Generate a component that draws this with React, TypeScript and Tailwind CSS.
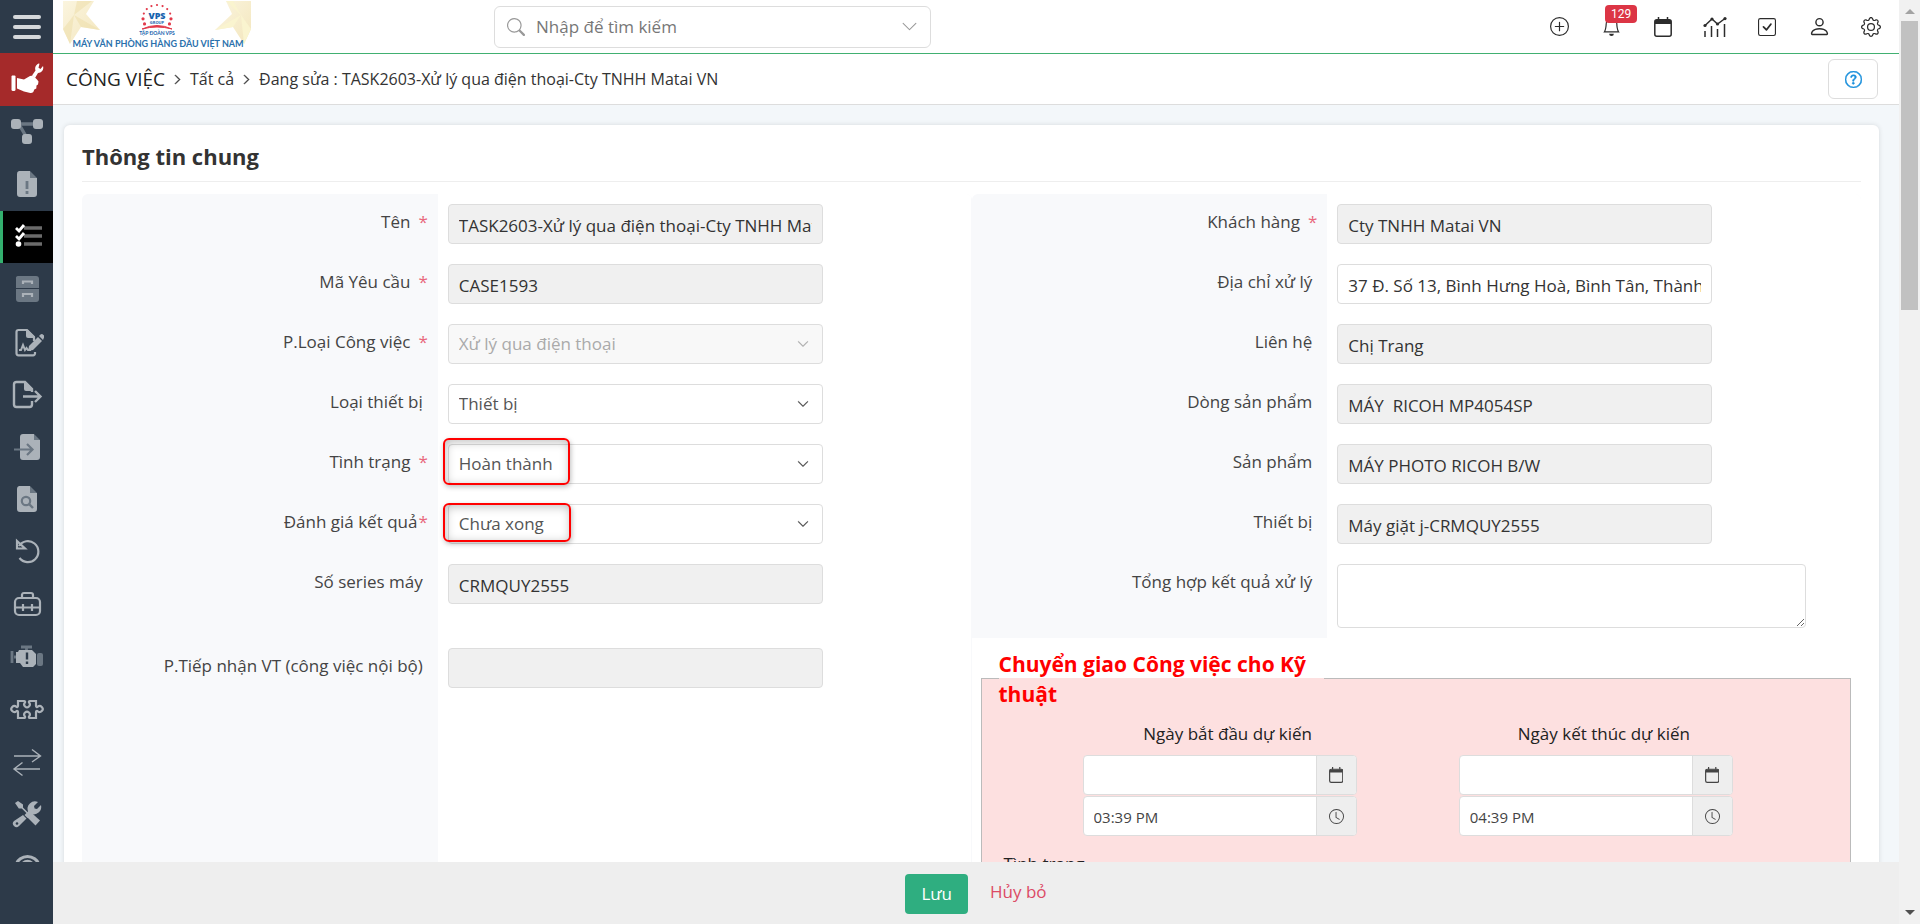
import { useState, type ReactNode } from "react";
import {
  BsBell,
  BsCheckSquare,
  BsChevronDown,
  BsChevronRight,
  BsClock,
  BsGear,
  BsPerson,
  BsPlusCircle,
  BsQuestionCircle,
  BsSearch
} from "react-icons/bs";

type Field = {
  id: string;
  label: string;
  value: string;
  required?: boolean;
  kind?: "text" | "select" | "textarea";
  readOnly?: boolean;
  disabled?: boolean;
  mark?: "tall" | "short";
};

const leftFields: Field[] = [
  { id: "name", label: "Tên", value: "TASK2603-Xử lý qua điện thoại-Cty TNHH Matai VN", required: true, readOnly: true },
  { id: "case", label: "Mã Yêu cầu", value: "CASE1593", required: true, readOnly: true },
  { id: "type", label: "P.Loại Công việc", value: "Xử lý qua điện thoại", required: true, kind: "select", disabled: true },
  { id: "deviceType", label: "Loại thiết bị", value: "Thiết bị", kind: "select" },
  { id: "status", label: "Tình trạng", value: "Hoàn thành", required: true, kind: "select", mark: "tall" },
  { id: "result", label: "Đánh giá kết quả", value: "Chưa xong", required: true, kind: "select", mark: "short" },
  { id: "serial", label: "Số series máy", value: "CRMQUY2555", readOnly: true },
  { id: "internal", label: "P.Tiếp nhận VT (công việc nội bộ)", value: "", readOnly: true }
];

const rightFields: Field[] = [
  { id: "customer", label: "Khách hàng", value: "Cty TNHH Matai VN", required: true, readOnly: true },
  { id: "address", label: "Địa chỉ xử lý", value: "37 Đ. Số 13, Bình Hưng Hoà, Bình Tân, Thành phố Hồ Chí Minh" },
  { id: "contact", label: "Liên hệ", value: "Chị Trang", readOnly: true },
  { id: "line", label: "Dòng sản phẩm", value: "MÁY  RICOH MP4054SP", readOnly: true },
  { id: "product", label: "Sản phẩm", value: "MÁY PHOTO RICOH B/W", readOnly: true },
  { id: "device", label: "Thiết bị", value: "Máy giặt j-CRMQUY2555", readOnly: true },
  { id: "summary", label: "Tổng hợp kết quả xử lý", value: "", kind: "textarea" }
];

function Icon({ children }: { children: ReactNode }) {
  return (
    <svg viewBox="0 0 34 34" className="size-[34px]" fill="none" aria-hidden="true">
      {children}
    </svg>
  );
}

const G = "#abb2b9";
const D = "#6b7783";

const menu: { name: string; icon: ReactNode }[] = [
  {
    name: "Quy trình",
    icon: (
      <>
        <path d="M10 9h14M10 11l7 12" stroke={D} strokeWidth="3.4" />
        <rect x="1" y="4" width="10" height="10" rx="3" fill={G} />
        <rect x="23" y="4" width="10" height="10" rx="3" fill={G} />
        <rect x="12" y="19" width="10" height="10" rx="3" fill={G} />
      </>
    )
  },
  {
    name: "Yêu cầu",
    icon: (
      <>
        <path d="M9 4h11v7h7v16a3 3 0 0 1-3 3H10a3 3 0 0 1-3-3V7a3 3 0 0 1 2-3z" fill={G} />
        <path d="M20 4l7 7h-7z" fill={D} />
        <path d="M17 14v8M17 24v3" stroke={D} strokeWidth="2.8" />
      </>
    )
  },
  {
    name: "Công việc",
    icon: (
      <>
        <path d="M14 8h18M14 16h18M14 24h18" stroke="#6b6b6b" strokeWidth="3.4" />
        <path d="M6 8l3 3 5-6M6 16l3 3 5-6" stroke="#fff" strokeWidth="2.8" />
        <circle cx="8.5" cy="24" r="2.8" fill="#fff" />
      </>
    )
  },
  {
    name: "Lưu trữ",
    icon: (
      <>
        <path d="M8 4h18a3 3 0 0 1 3 3v9H6V7a2.5 2.5 0 0 1 2-3zM6 17h23v10a3 3 0 0 1-3 3H9a3 3 0 0 1-3-3z" fill={D} />
        <path d="M13 12V9.5h9V12M13 25v-3h9v3" stroke={G} strokeWidth="2.2" />
      </>
    )
  },
  {
    name: "Hợp đồng",
    icon: (
      <>
        <path d="M25 27v1.5a1.8 1.8 0 0 1-1.8 1.8H8.5a2 2 0 0 1-2-2V7a2 2 0 0 1 2-2H17l7 7v4" stroke={G} strokeWidth="2.2" />
        <path d="M16 5h2l7 7v1h-7a2 2 0 0 1-2-2z" fill={G} />
        <path d="M9 25h2l2-5 2 5 1.5-2 1.5 2h3" stroke={G} strokeWidth="2" />
        <path d="M19 21l9-9 4 4-9 9-5 1z" fill={G} />
        <path d="M29 11l1.5-1.5q1.5-1 3 .5t.3 3L33 15z" fill={G} />
      </>
    )
  },
  {
    name: "Xuất",
    icon: (
      <>
        <path d="M22 24v3.5a2.5 2.5 0 0 1-2.5 2.5h-13A2.5 2.5 0 0 1 4 27.5v-20A2.5 2.5 0 0 1 6.5 5H15l7 7v3" stroke={G} strokeWidth="2.4" />
        <path d="M14 5h2l7 7v2h-7a2 2 0 0 1-2-2z" fill={G} />
        <path d="M13 19.5h17M25 14l5.5 5.5L25 25" stroke={G} strokeWidth="2.4" />
      </>
    )
  },
  {
    name: "Nhập",
    icon: (
      <>
        <path d="M13 4h11v6h6v17a3 3 0 0 1-3 3H13a3 3 0 0 1-3-3V7a3 3 0 0 1 3-3z" fill={G} />
        <path d="M24 4l6 6h-6z" fill={D} />
        <path d="M4 19.5h18M17 14l5.5 5.5L17 25" stroke={D} strokeWidth="2.2" />
      </>
    )
  },
  {
    name: "Tra cứu",
    icon: (
      <>
        <path d="M9 4h11v7h7v16a3 3 0 0 1-3 3H10a3 3 0 0 1-3-3V7a3 3 0 0 1 2-3z" fill={G} />
        <path d="M20 4l7 7h-7z" fill={D} />
        <circle cx="16" cy="19" r="4.2" stroke={D} strokeWidth="2.2" />
        <path d="M19 22l4 4" stroke={D} strokeWidth="2.4" />
      </>
    )
  },
  {
    name: "Hoàn lại",
    icon: <path d="M7 6v7.5h8zM9 11a10.5 10.5 0 1 1 .5 12" stroke={G} strokeWidth="2.2" />
  },
  {
    name: "Bộ dụng cụ",
    icon: (
      <>
        <rect x="5" y="11" width="25" height="17" rx="4" stroke={G} strokeWidth="2.2" />
        <path d="M12 11V7.5A2 2 0 0 1 14 6h7a2 2 0 0 1 2 2v3M5 20.5h25M13 17v7M22 17v7" stroke={G} strokeWidth="2.2" />
      </>
    )
  },
  {
    name: "Máy lỗi",
    icon: (
      <>
        <path d="M11 7h11M16.5 7v4M2 11v12M4 17h4" stroke={D} strokeWidth="2.8" />
        <rect x="27" y="13" width="6" height="13" rx="2" fill={D} />
        <path d="M9 10h13l4 4v10l-3 3H13l-3-4H6V12h2z" fill={G} />
        <path d="M17 12.5v7M17 21.5V24" stroke="#2d3a49" strokeWidth="2.4" />
      </>
    )
  },
  {
    name: "Linh kiện",
    icon: (
      <path
        d="M8 9h6a1 1 0 0 1 .8 1.7 2.8 2.8 0 1 0 4.4 0A1 1 0 0 1 20 9h6v5a1 1 0 0 0 1.6.8 3 3 0 1 1 0 4.4 1 1 0 0 0-1.6.8v6h-6a1 1 0 0 1-.8-1.7 2.8 2.8 0 1 0-4.4 0A1 1 0 0 1 14 26H8v-6a1 1 0 0 0-1.6-.8 3 3 0 1 1 0-4.4A1 1 0 0 0 8 14z"
        stroke={G}
        strokeWidth="2.2"
      />
    )
  },
  {
    name: "Luân chuyển",
    icon: <path d="M4 11h26M22 4.5l8.5 6.5-8.5 6M30 24H4M12.5 17.5L4 24l8.5 6.5" stroke={G} strokeWidth="1.4" />
  },
  {
    name: "Cài đặt",
    icon: (
      <>
        <path d="M5 6l3-2 5 3.5v3l6 6 3-.3 8 7.3-4.5 5-8-8 .3-3-6-6h-3z" fill={G} />
        <path d="M28 5l-4 4 .6 2.4 2.4.6 4-4a7.5 7.5 0 0 1-9.5 9l-4 4-3-3 3.5-3.5A7.5 7.5 0 0 1 28 5zM13 18l3.5 3.5L9 29a3.3 3.3 0 0 1-5-5z" fill={G} />
        <circle cx="7" cy="26.5" r="1.3" fill="#2d3a49" />
      </>
    )
  },
  {
    name: "Mạng",
    icon: (
      <>
        <path d="M6 15a12 12 0 0 1 23 0" stroke={G} strokeWidth="3" />
        <circle cx="17.5" cy="17" r="6" stroke={G} strokeWidth="2.5" />
      </>
    )
  }
];

function Sidebar() {
  return (
    <aside className="flex w-[53px] shrink-0 flex-col bg-[#2d3a49]">
      <button type="button" aria-label="Menu" className="flex h-[53px] shrink-0 flex-col items-center justify-center gap-1.5">
        <span className="h-[4px] w-7 rounded-full bg-[#d5d8db]" />
        <span className="h-[4px] w-7 rounded-full bg-[#d5d8db]" />
        <span className="h-[4px] w-7 rounded-full bg-[#d5d8db]" />
      </button>
      <nav className="min-h-0 flex-1 overflow-hidden">
        <ul className="flex h-[840px] flex-col">
          <li className="flex-1 bg-[#a52a2a]">
            <a href="#service" aria-label="Dịch vụ" className="flex h-full items-center justify-center">
              <Icon>
                <path d="M2 13.5h2.5a1 1 0 0 1 1 1v13A1.5 1.5 0 0 1 4 29H3a1.5 1.5 0 0 1-1.5-1.5v-13z" fill="#fff" />
                <path d="M7 16l7 1.5 6-3.5q2-.8 4 .5l3 3 1.5 2-.5 3-1.5 1-.2 3-2 1-1 2.5q-1.2 1.2-3 1L14 29.5 7 26.5z" fill="#fff" />
                <path d="M22 13.5l3.5-5q-1.5-4.5 3-7l1 .2-1 4 2 1.2 2.5-3q1.5 6-5 7.2L25 16z" fill="#fff" />
              </Icon>
            </a>
          </li>
          {menu.map((item, i) => (
            <li key={item.name} className={i === 2 ? "flex-1 bg-black shadow-[inset_3px_0_0_#33b06f]" : "flex-1"}>
              <a href="#module" aria-label={item.name} className="flex h-full items-center justify-center">
                <Icon>{item.icon}</Icon>
              </a>
            </li>
          ))}
        </ul>
      </nav>
      <div className="h-[62px] shrink-0" />
    </aside>
  );
}

function Logo() {
  const stars = Array.from({ length: 11 }, (_, i) => {
    const a = Math.PI * (1.15 - (i * 1.3) / 10);
    return { x: 94 + Math.cos(a) * 14, y: 17 - Math.sin(a) * 13 };
  });
  return (
    <svg viewBox="0 0 188 48" className="h-12 w-[188px]" role="img" aria-label="VPS Group">
      <defs>
        <linearGradient id="petal" x1="0" y1="0" x2="1" y2="1">
          <stop offset="0" stopColor="#fbf5df" />
          <stop offset="1" stopColor="#f3e6bd" />
        </linearGradient>
      </defs>
      <path d="M0 0h31l-8 13 14 16-19-3-11 17-7-15z" fill="url(#petal)" />
      <path d="M188 0h-25l6 13-17 16 18-3 11 17 7-15z" fill="url(#petal)" />
      <path d="M11 14L14 0h15zM11 14l26 15-19-3zM11 14L7 43 0 28z" fill="#efdfae" opacity=".6" />
      <path d="M178 14L163 0h7zM178 14l-26 15 18-3zM178 14l3 29 7-15z" fill="#faf4cf" />
      {stars.map((s, i) => (
        <circle key={i} cx={s.x} cy={s.y} r={i < 2 || i > 8 ? 1.6 : 1.1} fill="#e2394a" />
      ))}
      <text x="94" y="18" textAnchor="middle" fontSize="9" fontWeight="800" fill="#1763ae" fontFamily="Open Sans, sans-serif">VPS</text>
      <text x="94" y="23" textAnchor="middle" fontSize="4" fontWeight="700" fill="#1763ae" fontFamily="Open Sans, sans-serif">GROUP</text>
      <path d="M79 28q15-7 30 0-15-4-30 0z" fill="#e2394a" stroke="#e2394a" />
      <text x="94" y="34" textAnchor="middle" fontSize="5" fontWeight="700" fill="#1763ae" fontFamily="Lato, sans-serif">TẬP ĐOÀN VPS</text>
      <text x="95" y="46" textAnchor="middle" fontSize="9" fontWeight="700" fill="#2a70ac" fontFamily="Lato, sans-serif">MÁY VĂN PHÒNG HÀNG ĐẦU VIỆT NAM</text>
    </svg>
  );
}

function ChartIcon() {
  return (
    <svg viewBox="0 0 24 20" className="h-5 w-6" fill="none" stroke="currentColor" strokeWidth="1.5" aria-hidden="true">
      <path d="M2 8.5L9 2l5.5 5L22 1.5M2 14v6M8.5 9v11M14.5 12v8M21.5 7v13" />
      <g fill="currentColor" stroke="none">
        <circle cx="2" cy="8.5" r="1.6" />
        <circle cx="9" cy="2" r="1.6" />
        <circle cx="14.5" cy="7" r="1.6" />
        <circle cx="22" cy="1.6" r="1.6" />
      </g>
    </svg>
  );
}

function CalendarIcon({ size }: { size: number }) {
  return (
    <svg viewBox="0 0 18 20" height={size} fill="none" stroke="currentColor" strokeWidth="1.5" aria-hidden="true">
      <rect x="0.8" y="2.8" width="16.4" height="16.4" rx="2" />
      <path d="M1 3h16v4H1z" fill="currentColor" stroke="none" />
      <path d="M4.5 0v3M13.5 0v3" />
    </svg>
  );
}

function Header() {
  const actions = [
    { name: "Tạo nhanh", icon: <BsPlusCircle size={19} /> },
    { name: "Thông báo", icon: <BsBell size={19} />, badge: "129" },
    { name: "Lịch", icon: <CalendarIcon size={20} /> },
    { name: "Báo cáo", icon: <ChartIcon /> },
    { name: "Việc cần làm", icon: <BsCheckSquare size={18} /> },
    { name: "Tài khoản", icon: <BsPerson size={23} /> },
    { name: "Thiết lập", icon: <BsGear size={20} /> }
  ];
  return (
    <header className="flex h-[54px] shrink-0 items-center border-b border-[#41b071] bg-white">
      <a href="#home" className="mb-1 ml-[10px] w-[431px]">
        <Logo />
      </a>
      <div className="flex h-[42px] w-[437px] items-center rounded-md border border-[#ddd] px-3">
        <BsSearch size={18} className="text-[#999]" />
        <input
          type="search"
          aria-label="Nhập để tìm kiếm"
          placeholder="Nhập để tìm kiếm"
          className="min-w-0 flex-1 px-[11px] text-[17px] outline-none placeholder:text-[#777]"
        />
        <BsChevronDown size={17} className="text-[#999]" />
      </div>
      <div className="mr-0.5 ml-auto flex text-[#2c2c2c]">
        {actions.map((a) => (
          <button key={a.name} type="button" aria-label={a.name} className="relative flex h-10 w-[52px] items-center justify-center">
            {a.icon}
            {a.badge && (
              <span className="absolute -top-[2px] left-5 rounded-sm bg-[#dc3545] px-1.5 font-[Roboto,sans-serif] text-xs leading-[18px] text-white">
                {a.badge}
              </span>
            )}
          </button>
        ))}
      </div>
    </header>
  );
}

function Breadcrumb() {
  return (
    <div className="flex h-[51px] shrink-0 items-center border-b border-[#ddd] bg-white pr-[21px] pl-[13px] text-base text-[#333]">
      <h1 className="text-[19px] text-[#222]">CÔNG VIỆC</h1>
      <BsChevronRight size={11} className="mx-[7px]" strokeWidth={1} />
      <a href="#all">Tất cả</a>
      <BsChevronRight size={11} className="mx-[7px]" strokeWidth={1} />
      <span>Đang sửa : TASK2603-Xử lý qua điện thoại-Cty TNHH Matai VN</span>
      <button type="button" aria-label="Trợ giúp" className="ml-auto flex h-10 w-[50px] items-center justify-center rounded-md border border-[#ddd] text-[#1a8fdc]">
        <BsQuestionCircle size={17} strokeWidth={0.5} />
      </button>
    </div>
  );
}

const box = "w-full rounded-[4px] border border-[#ddd] px-[10px] text-[17px] outline-none";

function Control({ field }: { field: Field }) {
  const [value, setValue] = useState(field.value);

  if (field.kind === "textarea") {
    return (
      <div className="w-[469px]">
        <textarea
          id={field.id}
          className={`${box} block h-16 resize-y bg-white`}
          value={value}
          onChange={(e) => setValue(e.target.value)}
        />
      </div>
    );
  }

  if (field.kind === "select") {
    return (
      <div className="relative w-[375px]">
        <select
          id={field.id}
          disabled={field.disabled}
          className={`${box} h-10 appearance-none bg-white text-[#555] disabled:bg-[#f8f8f8] disabled:text-[#aaa] disabled:opacity-100`}
        >
          <option>{field.value}</option>
        </select>
        <BsChevronDown
          size={12}
          strokeWidth={0.6}
          className={`pointer-events-none absolute top-[14px] right-[14px] ${field.disabled ? "text-[#aaa]" : "text-[#444]"}`}
        />
        {field.mark && (
          <span
            className={`pointer-events-none absolute -left-[5px] rounded-md border-2 border-[#f00] shadow-[1px_2px_5px_rgba(0,0,0,0.25),inset_1px_2px_10px_rgba(0,0,0,0.25)] ${
              field.mark === "tall" ? "-top-[6px] h-[47px] w-[127px]" : "-top-px h-[39px] w-[128px]"
            }`}
          />
        )}
      </div>
    );
  }

  return (
    <div className="w-[375px]">
      <input
        id={field.id}
        type="text"
        readOnly={field.readOnly}
        className={`${box} h-10 pt-0.5 text-[#333] ${field.readOnly ? "bg-[#f0f0f0]" : "bg-white"}`}
        value={value}
        onChange={(e) => setValue(e.target.value)}
      />
    </div>
  );
}

function Row({ field, className }: { field: Field; className: string }) {
  const gap = field.label.length > 15 && field.required && !field.disabled ? "ml-px" : "ml-2";
  return (
    <div className={`flex ${className}`}>
      <div className="w-2/5 pt-4 pr-[10px] text-right text-[17px] leading-6 text-[#444]">
        <label htmlFor={field.id} className={field.required ? "" : "pr-[5px]"}>
          {field.label}
          {field.required && <span className={`${gap} text-[#e8677c]`}>*</span>}
        </label>
      </div>
      <div className="w-3/5 bg-white px-[10px] py-[10px]">
        <Control field={field} />
      </div>
    </div>
  );
}

function DateTimeGroup({ id, label, time }: { id: string; label: string; time: string }) {
  return (
    <div>
      <label htmlFor={id} className="block pb-[9px] text-center text-[17px] leading-6 text-[#222]">
        {label}
      </label>
      <div className="ml-[43px] flex w-[274px] flex-col gap-px text-[#444]">
        <div className="flex h-10 overflow-hidden rounded-[4px] border border-[#ddd] bg-white">
          <input id={id} type="text" className="min-w-0 flex-1 px-[10px] outline-none" />
          <button type="button" aria-label="Chọn ngày" className="flex w-10 items-center justify-center border-l border-[#ddd] bg-[#eee]">
            <CalendarIcon size={16} />
          </button>
        </div>
        <div className="flex h-10 overflow-hidden rounded-[4px] border border-[#ddd] bg-white">
          <input type="text" aria-label={`${label} giờ`} defaultValue={time} className="min-w-0 flex-1 px-[10px] pt-0.5 text-[15px] outline-none" />
          <button type="button" aria-label="Chọn giờ" className="flex w-10 items-center justify-center border-l border-[#ddd] bg-[#eee]">
            <BsClock size={15} />
          </button>
        </div>
      </div>
    </div>
  );
}

function Transfer() {
  return (
    <fieldset className="mt-[9px] mr-[10px] ml-[9px] border border-[#bbb] bg-[#fde0e0] pb-10">
      <legend className="ml-[17px] w-[325px] pt-0.5 text-[21px] leading-[30px] font-bold text-[#f00]">
        Chuyển giao Công việc cho Kỹ thuật
      </legend>
      <div className="grid grid-cols-2 px-[58px] pt-[13px]">
        <DateTimeGroup id="start" label="Ngày bắt đầu dự kiến" time="03:39 PM" />
        <DateTimeGroup id="end" label="Ngày kết thúc dự kiến" time="04:39 PM" />
      </div>
      <p className="mt-4 ml-[22px] text-[17px] leading-6 text-[#222]">Tình trạng</p>
    </fieldset>
  );
}

function Scrollbar() {
  return (
    <div className="flex w-[21px] shrink-0 flex-col items-center bg-[#f1f1f1] py-[9px]" aria-hidden="true">
      <span className="size-0 border-x-[5px] border-b-[5px] border-x-transparent border-b-[#a3a3a3]" />
      <span className="mt-[7px] h-[289px] w-[17px] bg-[#c1c1c1]" />
      <span className="mt-auto size-0 border-x-[5px] border-t-[5px] border-x-transparent border-t-[#505050]" />
    </div>
  );
}

export default function App() {
  return (
    <div className="flex h-screen overflow-hidden bg-[#f3f7fa] font-['Open_Sans',sans-serif]">
      <Sidebar />
      <div className="flex min-w-0 flex-1 flex-col">
        <Header />
        <Breadcrumb />
        <main className="min-h-0 flex-1 overflow-hidden px-[11px] pt-5 pr-5">
          <section className="rounded-md bg-white px-[18px] pb-20 shadow-[0_0_5px_rgba(0,0,0,0.12)]">
            <h2 className="h-[57px] border-b border-[#eee] pt-[15px] text-[22px] leading-8 font-bold text-[#333]">Thông tin chung</h2>
            <div className="mt-3 flex">
              <div className="flex w-1/2 flex-col overflow-hidden rounded-t-md bg-[#f8f9fb]">
                {leftFields.map((f) => (
                  <Row
                    key={f.id}
                    field={f}
                    className={f.id === "internal" ? "flex-1" : f.id === "serial" ? "h-[84px]" : "h-[60px]"}
                  />
                ))}
              </div>
              <div className="w-1/2">
                <div className="overflow-hidden rounded-t-md bg-[#f8f9fb]">
                  {rightFields.map((f) => (
                    <Row key={f.id} field={f} className={f.kind === "textarea" ? "h-[84px]" : "h-[60px]"} />
                  ))}
                </div>
                <Transfer />
              </div>
            </div>
          </section>
        </main>
        <footer className="flex h-[62px] shrink-0 items-center justify-center gap-[22px] bg-[#eee] pt-0.5 text-[17px]">
          <button type="button" className="h-10 rounded-[4px] bg-[#2fae80] px-4 text-white">
            Lưu
          </button>
          <a href="#cancel" className="pb-1 text-[#dc4a65]">
            Hủy bỏ
          </a>
        </footer>
      </div>
      <Scrollbar />
    </div>
  );
}
